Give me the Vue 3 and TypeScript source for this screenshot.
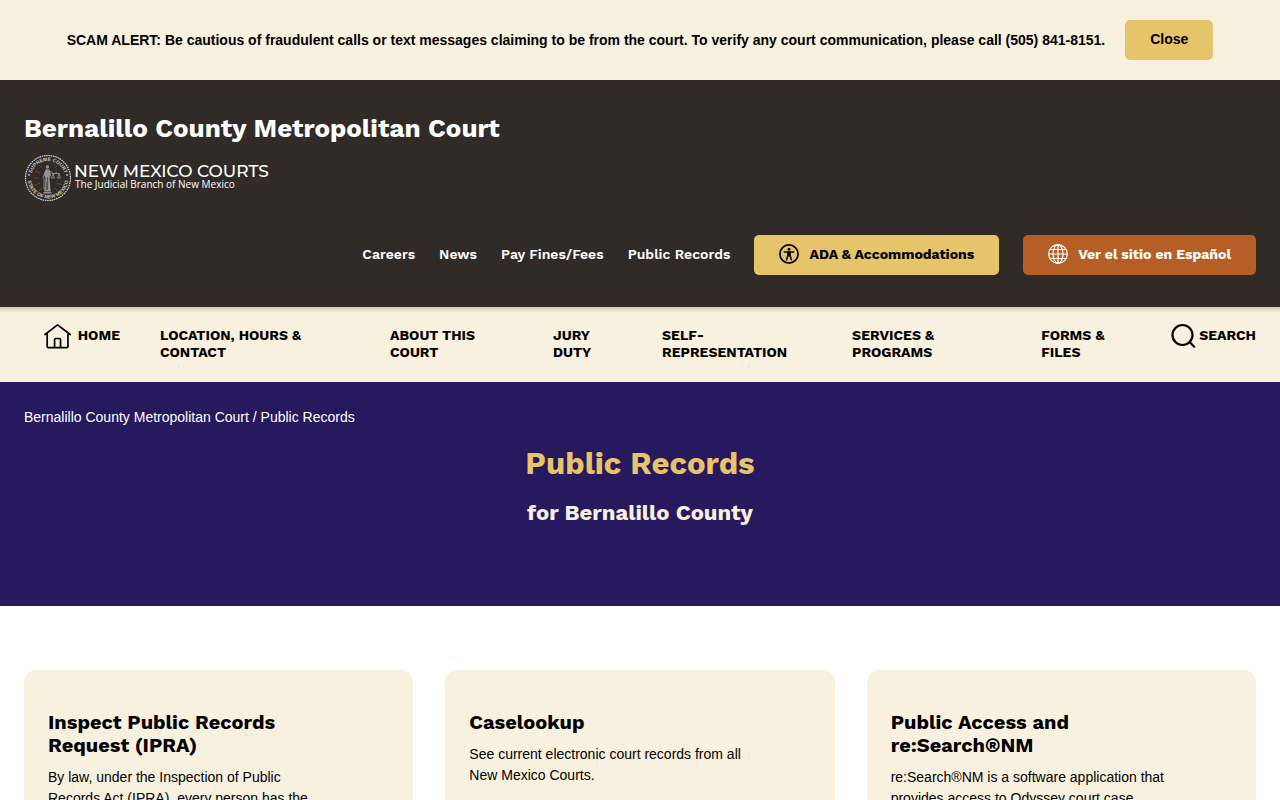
<script setup lang="ts">
import { ref } from 'vue'

interface Card {
  title: string
  text: string
}

const alertOpen = ref(true)

const quickLinks: string[] = ['Careers', 'News', 'Pay Fines/Fees', 'Public Records']

const sections: string[] = [
  'Location, Hours & Contact',
  'About this Court',
  'Jury Duty',
  'Self-Representation',
  'Services & Programs',
  'Forms & Files',
]

const cards: Card[] = [
  {
    title: 'Inspect Public Records Request (IPRA)',
    text: 'By law, under the Inspection of Public Records Act (IPRA), every person has the',
  },
  {
    title: 'Caselookup',
    text: 'See current electronic court records from all New Mexico Courts.',
  },
  {
    title: 'Public Access and re:Search®NM',
    text: 're:Search®NM is a software application that provides access to Odyssey court case',
  },
]
</script>

<template>
  <div class="page">
    <div v-if="alertOpen" class="alert" role="alert">
      <p class="alert-text">
        SCAM ALERT: Be cautious of fraudulent calls or text messages claiming to be from the court. To verify any court communication, please call (505) 841-8151.
      </p>
      <button class="button close" type="button" @click="alertOpen = false">Close</button>
    </div>

    <header class="header">
      <a class="court-name" href="#">Bernalillo County Metropolitan Court</a>
      <a class="logo" href="#">
        <svg class="seal" viewBox="0 0 48 48" aria-hidden="true">
          <defs>
            <path id="seal-top" d="M7 24a17 17 0 0 1 34 0" />
            <path id="seal-bottom" d="M3.500 24a20.500 20.500 0 0 0 41 0" />
          </defs>
          <circle cx="24" cy="24" r="22.500" fill="none" stroke="#d8d5d2" stroke-width="1.200" stroke-dasharray="1.600 .7" />
          <g fill="#cbc7c4" font-family="Liberation Sans, sans-serif" font-size="5" font-weight="700" text-anchor="middle">
            <text><textPath href="#seal-top" startOffset="50%">SUPREME COURT</textPath></text>
            <text><textPath href="#seal-bottom" startOffset="50%">STATE OF NEW MEXICO</textPath></text>
          </g>
          <g fill="#cbc7c4">
            <circle cx="5" cy="21" r=".9" />
            <circle cx="43" cy="21" r=".9" />
          </g>
          <path d="M18 14l-3-3M16 19l-5-2M15 24h-5M16 29l-5 2M18 34l-3 3M31 14l3-3M33 29l5 2M31 34l3 3" stroke="#69635f" stroke-width=".6" />
          <g fill="#96918d">
            <circle cx="23.500" cy="13" r="1.700" />
            <path d="M21.500 15.500h4l1.500 5-1.500 4 1.200 13h-6.500l1.300-13-1.500-4z" />
            <path d="M19.500 38h8v1.500h-8z" />
          </g>
          <path d="M26 17l4 3 3-2M28 19.500h8M29 20l-1.500 4h3zM35 20l-1.500 4h3zM22 17l-3 6 1 2v10" fill="none" stroke="#aaa5a1" stroke-width=".7" />
          <path d="M23.500 23v13M22 28l.5 8" stroke="#4a4440" stroke-width=".8" />
        </svg>
        <span class="logo-words">
          <span class="logo-name">NEW MEXICO COURTS</span>
          <span class="logo-tag">The Judicial Branch of New Mexico</span>
        </span>
      </a>

      <nav class="utility" aria-label="Quick links">
        <a v-for="link in quickLinks" :key="link" class="quick" href="#">{{ link }}</a>
        <a class="button ada" href="#">
          <svg class="button-icon" viewBox="0 0 20 20" aria-hidden="true">
            <circle cx="10" cy="10" r="9.100" fill="none" stroke="#000" stroke-width="1.700" />
            <circle cx="10" cy="5.300" r="1.500" />
            <path d="M5.300 8h9.400M8.900 11.500L7.600 15.700M11.100 11.500l1.300 4.200" fill="none" stroke="#000" stroke-width="1.500" stroke-linecap="round" stroke-linejoin="round" />
            <path d="M8.200 7.800h3.600v4.700H8.200z" />
          </svg>
          ADA &amp; Accommodations
        </a>
        <a class="button spanish" href="#" lang="es">
          <svg class="button-icon" viewBox="0 0 20 20" fill="none" stroke="#fff" stroke-width="1.200" aria-hidden="true">
            <circle cx="10" cy="10" r="9.300" />
            <ellipse cx="10" cy="10" rx="5" ry="9.300" />
            <path d="M10 .7v18.600M.7 10h18.600M2.500 5.500h15M2.500 14.500h15" />
          </svg>
          Ver el sitio en Español
        </a>
      </nav>
    </header>

    <nav class="main-nav" aria-label="Main">
      <a class="nav-item home" href="#">
        <svg class="home-icon" viewBox="0 0 28 26" fill="none" stroke="#000" stroke-width="1.700" stroke-linecap="round" stroke-linejoin="round" aria-hidden="true">
          <path d="M1 11.500L13.700 1.700 26.500 11.500M3.200 10v13.500q0 1.200 1.200 1.200H23q1.200 0 1.200-1.200V10M10.700 24.500v-7.800q0-1.200 1.200-1.200h3.600q1.200 0 1.200 1.200v7.800" />
        </svg>
        Home
      </a>
      <a v-for="section in sections" :key="section" class="nav-item" href="#">{{ section }}</a>
      <button class="nav-item search" type="button">
        <svg class="search-icon" viewBox="0 0 25 26" fill="none" stroke="#000" stroke-width="2.200" stroke-linecap="round" aria-hidden="true">
          <circle cx="11.500" cy="12" r="10" />
          <path d="M18.800 19.300l4.400 4.400" />
        </svg>
        Search
      </button>
    </nav>

    <main>
      <section class="hero">
        <nav class="crumbs" aria-label="Breadcrumb">
          <a href="#">Bernalillo County Metropolitan Court</a> / <span>Public Records</span>
        </nav>
        <h1 class="hero-title">Public Records</h1>
        <p class="hero-sub">for Bernalillo County</p>
      </section>

      <section class="cards">
        <article v-for="card in cards" :key="card.title" class="card">
          <h2 class="card-title">{{ card.title }}</h2>
          <p class="card-text">{{ card.text }}</p>
        </article>
      </section>
    </main>
  </div>
</template>

<style>
body {
  margin: 0;
  background: #fff;
}
</style>

<style scoped>
.page {
  --heading: "Work Sans", Inter, sans-serif;
  --cream: #f9f1df;
  --gold: #e6c46a;
  font-family: "Liberation Sans", Arial, sans-serif;
  font-size: 14px;
  line-height: 21px;
  color: #000;
}

a {
  color: inherit;
  text-decoration: none;
}

.alert {
  display: flex;
  align-items: center;
  justify-content: center;
  gap: 20px;
  padding: 20px;
  background: var(--cream);
}

.alert-text {
  margin: 0;
  font-weight: 700;
}

.button {
  display: flex;
  align-items: center;
  box-sizing: border-box;
  height: 40px;
  padding: 0 25px 2px;
  border: 0;
  border-radius: 5px;
  background: var(--gold);
  color: #000;
  font: 700 14px/20px var(--heading);
  white-space: nowrap;
  cursor: pointer;
}

.close {
  font-family: "Liberation Sans", Arial, sans-serif;
}

.header {
  display: flex;
  flex-direction: column;
  align-items: flex-start;
  padding: 32px 24px;
  background: #312b27;
  color: #fff;
}

.court-name {
  font: 700 26px/32px var(--heading);
}

.logo {
  display: flex;
  gap: 2px;
  margin: 10px 0 33px;
}

.seal {
  width: 48px;
  height: 48px;
}

.logo-words {
  display: flex;
  flex-direction: column;
  padding-top: 8px;
}

.logo-name {
  font: 500 17px/18px Montserrat, Inter, sans-serif;
}

.logo-tag {
  padding-left: 1px;
  font: 500 10px/8px "Open Sans", "Noto Sans", sans-serif;
}

.utility {
  display: flex;
  align-items: center;
  align-self: stretch;
  justify-content: flex-end;
  gap: 24px;
}

.quick {
  padding-bottom: 2px;
  font: 600 14px/20px var(--heading);
  white-space: nowrap;
}

.button-icon {
  width: 20px;
  height: 20px;
  margin-right: 10px;
}

.spanish {
  background: #b55e26;
  color: #fff;
}

.main-nav {
  display: grid;
  grid-template-columns: 76px 190fr 123fr 69fr 150fr 149fr 90fr auto;
  column-gap: 40px;
  align-items: start;
  padding: 20px 24px 21px 44px;
  background: linear-gradient(rgb(0 0 0 / 16%), transparent 6px) var(--cream);
}

.nav-item {
  padding: 0;
  border: 0;
  background: none;
  color: #000;
  font: 700 14px/17px var(--heading);
  text-align: left;
  text-transform: uppercase;
}

.home,
.search {
  display: flex;
  white-space: nowrap;
}

.home-icon {
  width: 28px;
  height: 26px;
  margin: -4px 6px -6px 0;
}

.search-icon {
  width: 25px;
  height: 26px;
  margin: -4px 3px -6px 0;
}

.hero {
  padding: 25px 24px 78px;
  background: #26195e;
  color: #fff;
  text-align: center;
}

.crumbs {
  text-align: left;
}

.hero-title {
  margin: 16px 0 0;
  color: var(--gold);
  font: 700 31px/40px var(--heading);
}

.hero-sub {
  margin: 14px 0 0;
  color: var(--cream);
  font: 700 22px/30px var(--heading);
}

.cards {
  display: grid;
  grid-template-columns: repeat(3, minmax(0, 1fr));
  gap: 32px;
  padding: 64px 24px;
}

.card {
  padding: 41px 88px 41px 24px;
  border-radius: 12px;
  background: var(--cream);
}

.card-title {
  margin: 0 0 10px;
  font: 700 20px/23px var(--heading);
}

.card-text {
  margin: 0;
}
</style>
